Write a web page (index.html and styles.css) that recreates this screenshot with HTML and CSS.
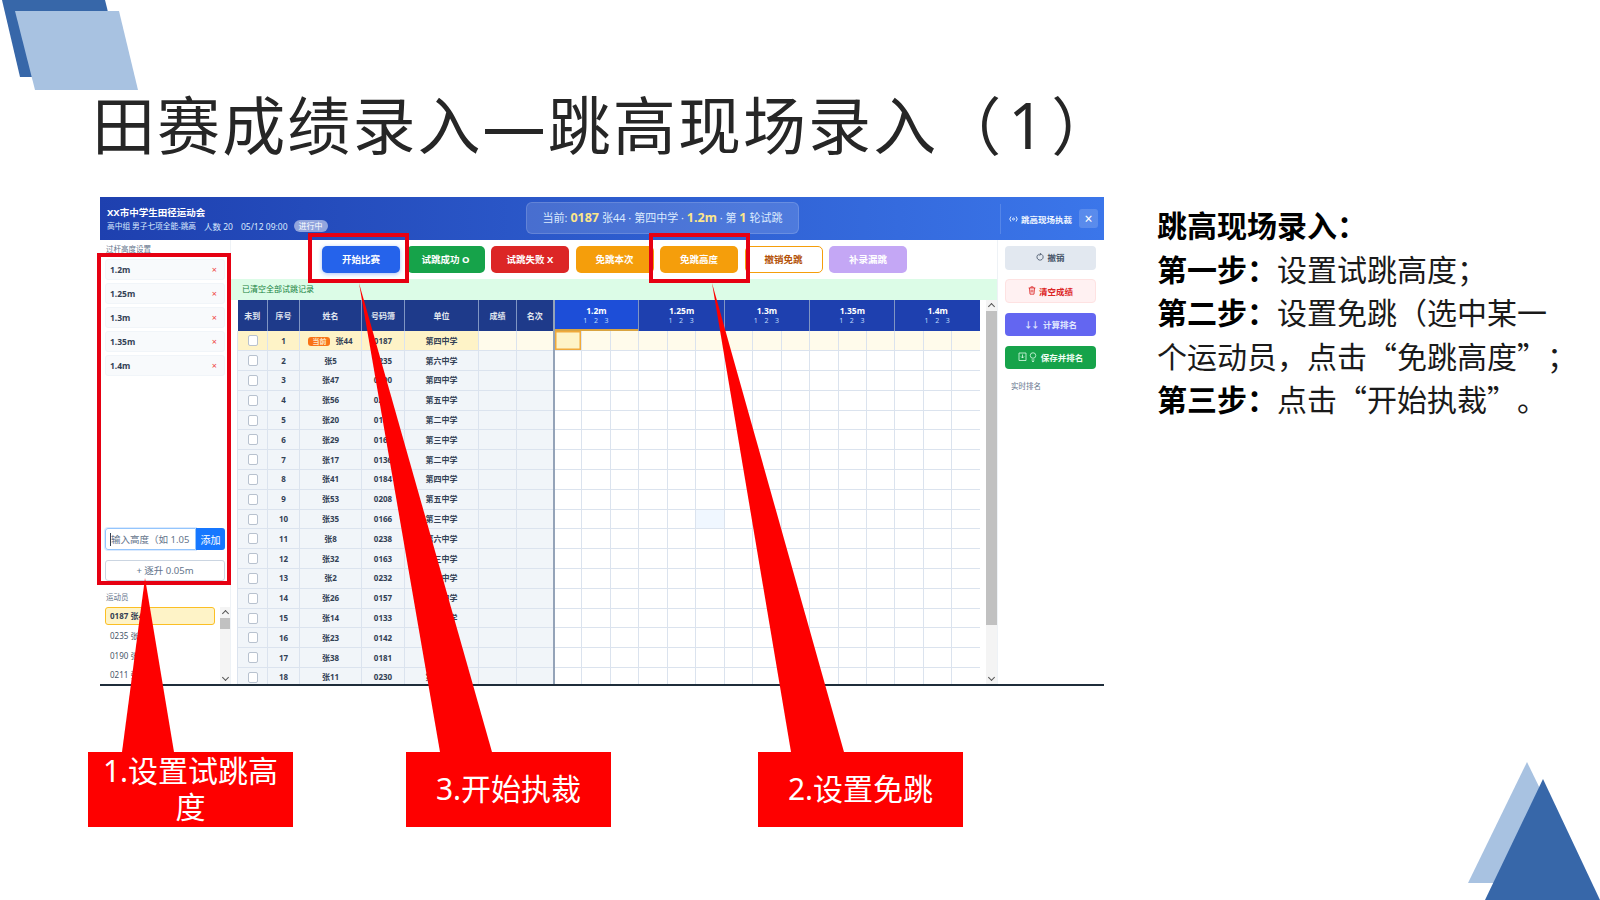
FILE: index.html
```html
<!DOCTYPE html>
<html lang="zh-CN">
<head>
    <meta charset="UTF-8">
    <title>田赛成绩录入</title>
    <link rel="stylesheet" href="styles.css">
</head>
<body>
<div class="slide">
    <svg class="decor" width="1600" height="900" viewBox="0 0 1600 900">
        <polygon points="2,0 105,0 124,77 20,77" fill="#3767a9"/>
        <polygon points="15,11 119,11 138,90 35,90" fill="#a8c2e1"/>
        <polygon points="1527,762 1586,883 1468,883" fill="#a8c2e1"/>
        <polygon points="1543,779 1600,900 1485,900" fill="#3767a9"/>
    </svg>

    <h1 class="slide-title">田赛成绩录入—跳高现场录入<span class="title-num">（1）</span></h1>

    <div class="app">
        <header class="app-head">
            <div class="head-info">
                <div class="head-title">XX市中学生田径运动会</div>
                <div class="head-sub"><span class="sub-event">高中组 男子七项全能-跳高</span><span class="gap"></span>人数 20<span class="gap"></span>05/12 09:00<span class="badge">进行中</span></div>
            </div>
            <div class="head-current">当前: <b>0187</b> 张44 · 第四中学 · <b>1.2m</b> · 第 <b>1</b> 轮试跳</div>
            <div class="head-right">
                <svg width="9" height="8" viewBox="0 0 18 16" fill="none" stroke="#dbeafe" stroke-width="2"><circle cx="9" cy="8" r="2"/><path d="M4 3a7 7 0 0 0 0 10M14 3a7 7 0 0 1 0 10"/></svg>
                <span>跳高现场执裁</span>
                <button class="head-close">×</button>
            </div>
        </header>

        <div class="app-body">
            <aside class="side">
                <div class="side-label">过杆高度设置</div>
                <ul class="height-list">
                    <li>1.2m<i>×</i></li>
                    <li>1.25m<i>×</i></li>
                    <li>1.3m<i>×</i></li>
                    <li>1.35m<i>×</i></li>
                    <li>1.4m<i>×</i></li>
                </ul>
                <div class="height-add">
                    <div class="height-input"><span class="caret"></span>输入高度（如 1.05</div>
                    <button class="add-btn">添加</button>
                </div>
                <button class="step-btn">+ 逐升 0.05m</button>
                <div class="side-label athletes-label">运动员</div>
                <div class="athletes">
                    <ul class="athlete-list">
                        <li class="on">0187 张44</li>
                        <li>0235 张5</li>
                        <li>0190 张47</li>
                        <li>0211 张56</li>
                    </ul>
                    <div class="side-scroll"><span class="up"></span><span class="thumb"></span><span class="down"></span></div>
                </div>
            </aside>

            <main class="main">
                <div class="toolbar">
                    <button class="btn blue">开始比赛</button>
                    <button class="btn green">试跳成功 O</button>
                    <button class="btn red">试跳失败 X</button>
                    <button class="btn orange">免跳本次</button>
                    <button class="btn orange">免跳高度</button>
                    <button class="btn outline">撤销免跳</button>
                    <button class="btn purple">补录漏跳</button>
                </div>
                <div class="flash">已清空全部试跳记录</div>
                <div class="table-wrap">
                    <div class="table-clip">
                        <table class="grid">
                            <colgroup id="cols"></colgroup>
                            <thead>
                                <tr>
                                    <th>未到</th><th>序号</th><th>姓名</th><th>号码簿</th><th>单位</th><th>成绩</th><th class="last-fixed">名次</th>
                                    <th colspan="3" class="h-col now">1.2m<small>1&nbsp; 2&nbsp; 3</small></th>
                                    <th colspan="3" class="h-col">1.25m<small>1&nbsp; 2&nbsp; 3</small></th>
                                    <th colspan="3" class="h-col">1.3m<small>1&nbsp; 2&nbsp; 3</small></th>
                                    <th colspan="3" class="h-col">1.35m<small>1&nbsp; 2&nbsp; 3</small></th>
                                    <th colspan="3" class="h-col">1.4m<small>1&nbsp; 2&nbsp; 3</small></th>
                                </tr>
                            </thead>
                            <tbody id="rows"></tbody>
                        </table>
                    </div>
                    <div class="table-scroll"><span class="up"></span><span class="thumb"></span><span class="down"></span></div>
                </div>
            </main>

            <aside class="tools">
                <button class="tool gray">
                    <svg width="8" height="8" viewBox="0 0 16 16" fill="none" stroke="#475569" stroke-width="1.7"><path d="M5.2 2.6a6.2 6.2 0 1 0 3.4-.7"/><path d="M8.6 0v4H5"/></svg>
                    撤销
                </button>
                <button class="tool pink">
                    <svg width="8" height="9" viewBox="0 0 14 16" fill="none" stroke="#dc2626" stroke-width="1.5"><path d="M1 3.5h12M5 3.5V1.5h4v2M2.5 3.5l1 11h7l1-11M5.5 6.5v5M8.5 6.5v5"/></svg>
                    清空成绩
                </button>
                <button class="tool indigo"><span class="arrows">↓↓</span> 计算排名</button>
                <button class="tool green">
                    <svg width="20" height="10" viewBox="0 0 40 20" fill="none" stroke="#dcfce7" stroke-width="1.6"><path d="M2 2h14v15H2zM9 5v7M6 9l3 3 3-3"/><circle cx="30" cy="7" r="5.5"/><path d="M27 16h6M28 19h4"/></svg>
                    保存并排名
                </button>
                <div class="tools-label">实时排名</div>
            </aside>
        </div>
    </div>

    <div class="frame frame-side"></div>
    <div class="frame frame-start"></div>
    <div class="frame frame-skip"></div>

    <svg class="decor pointers" width="1600" height="900" viewBox="0 0 1600 900">
        <polygon points="145,578 122,752 174,752" fill="#fe0000"/>
        <polygon points="359,283 440,752 492,752" fill="#fe0000"/>
        <polygon points="712,283 791,752 844,752" fill="#fe0000"/>
    </svg>

    <div class="callout c1">1.设置试跳高度</div>
    <div class="callout c2">3.开始执裁</div>
    <div class="callout c3">2.设置免跳</div>

    <div class="steps">
        <b>跳高现场录入：</b><br>
        <b>第一步：</b>设置试跳高度；<br>
        <b>第二步：</b>设置免跳（选中某一<br>
        个运动员，点击“免跳高度”；<br>
        <b>第三步：</b>点击“开始执裁”。
    </div>
</div>
<script src="script.js"></script>
</body>
</html>
```

FILE: styles.css
```css
* {
    box-sizing: border-box;
}
body {
    margin: 0;
    background: #fff;
    font-family: "Noto Sans", "Noto Sans CJK SC", sans-serif;
}
button {
    font-family: inherit;
    border: none;
    padding: 0;
}
ul {
    list-style: none;
    margin: 0;
    padding: 0;
}

/* slide */
.slide {
    position: relative;
    width: 1600px;
    height: 900px;
    overflow: hidden;
    background: #fff;
}
.decor {
    position: absolute;
    left: 0;
    top: 0;
}
.pointers {
    z-index: 3;
}
.slide-title {
    position: absolute;
    left: 92px;
    top: 79px;
    margin: 0;
    font-size: 63px;
    line-height: 92px;
    font-weight: 400;
    letter-spacing: 2.1px;
    color: #262626;
    white-space: nowrap;
}
.title-num {
    letter-spacing: 7px;
}
.frame {
    position: absolute;
    z-index: 2;
    border: 4px solid #e60012;
}
.frame-side {
    left: 97px;
    top: 253px;
    width: 134px;
    height: 332px;
}
.frame-start {
    left: 308px;
    top: 233px;
    width: 101px;
    height: 50px;
}
.frame-skip {
    left: 649px;
    top: 233px;
    width: 101px;
    height: 50px;
}
.callout {
    position: absolute;
    z-index: 4;
    top: 752px;
    width: 205px;
    height: 75px;
    display: flex;
    align-items: center;
    justify-content: center;
    padding: 0 8px 2px;
    background: #fe0000;
    color: #fff;
    font-size: 30px;
    line-height: 36px;
    text-align: center;
}
.c1 {
    left: 88px;
}
.c2 {
    left: 406px;
}
.c3 {
    left: 758px;
}
.steps {
    position: absolute;
    left: 1157px;
    top: 203px;
    width: 430px;
    font-family: "Noto Sans CJK SC", sans-serif;
    font-size: 30px;
    line-height: 43.5px;
    color: #1a1a1a;
    white-space: nowrap;
    text-spacing-trim: space-all;
}
.steps b {
    font-weight: 700;
    color: #000;
}

/* app screenshot */
.app {
    position: absolute;
    left: 100px;
    top: 197px;
    width: 1004px;
    height: 489px;
    overflow: hidden;
    display: flex;
    flex-direction: column;
    background: #fff;
    border-bottom: 2px solid #1f2d3a;
}
.app-head {
    flex: none;
    height: 43px;
    display: flex;
    align-items: center;
    background: linear-gradient(90deg, #1e40af, #3b76ea);
    color: #fff;
    padding-left: 7px;
}
.head-info {
    width: 419px;
}
.head-title {
    font-size: 9.5px;
    line-height: 15px;
    font-weight: 700;
}
.head-sub {
    font-size: 8.5px;
    line-height: 13px;
    color: #dbeafe;
    display: flex;
    align-items: center;
}
.sub-event {
    font-size: 7.7px;
}
.gap {
    width: 8px;
}
.badge {
    margin-left: 6px;
    padding: 0 5px;
    border-radius: 7px;
    background: rgba(255, 255, 255, 0.5);
    color: #fff;
    font-size: 8px;
    line-height: 12px;
}
.head-current {
    width: 273px;
    height: 32px;
    margin-top: -1px;
    line-height: 30px;
    text-align: center;
    font-size: 11px;
    color: #dbeafe;
    white-space: nowrap;
    border: 1px solid rgba(255, 255, 255, 0.15);
    border-radius: 6px;
    background: rgba(255, 255, 255, 0.14);
}
.head-current b {
    color: #fde68a;
    font-size: 12.5px;
}
.head-right {
    flex: 1;
    height: 30px;
    margin-left: 201px;
    padding-left: 8px;
    display: flex;
    align-items: center;
    gap: 3px;
    border-left: 1px solid rgba(255, 255, 255, 0.15);
    font-size: 8.5px;
    font-weight: 700;
    color: #eff6ff;
    white-space: nowrap;
}
.head-close {
    width: 19px;
    height: 19px;
    margin-left: 4px;
    border-radius: 3px;
    background: rgba(255, 255, 255, 0.16);
    color: #fff;
    font-size: 14px;
    line-height: 19px;
}
.app-body {
    flex: 1;
    min-height: 0;
    display: flex;
}

/* left column */
.side {
    flex: none;
    width: 131px;
    padding: 0 5px 0 5px;
    border-right: 1px solid #eef2f6;
    display: flex;
    flex-direction: column;
}
.side-label {
    height: 19px;
    padding-left: 1px;
    font-size: 7.5px;
    line-height: 19px;
    color: #64748b;
}
.height-list {
    flex: none;
    height: 269px;
}
.height-list li {
    height: 21px;
    margin-bottom: 3px;
    padding: 0 7px 0 4px;
    display: flex;
    justify-content: space-between;
    align-items: center;
    border: 1px solid #f1f5f9;
    border-radius: 3px;
    background: #f8fafc;
    font-size: 8.5px;
    font-weight: 700;
    color: #334155;
}
.height-list i {
    font-style: normal;
    font-weight: 400;
    color: #ef4444;
    font-size: 9px;
}
.height-add {
    flex: none;
    height: 22px;
    display: flex;
}
.height-input {
    flex: 1;
    display: flex;
    align-items: center;
    padding-left: 4px;
    border: 1px solid #93c5fd;
    border-radius: 3px 0 0 3px;
    box-shadow: 0 0 0 1px #dbeafe;
    font-size: 9.5px;
    color: #64748b;
    white-space: nowrap;
    overflow: hidden;
}
.caret {
    width: 1px;
    height: 13px;
    background: #334155;
}
.add-btn {
    flex: none;
    width: 29px;
    border-radius: 0 3px 3px 0;
    background: #1677ff;
    color: #fff;
    font-size: 10px;
}
.step-btn {
    flex: none;
    height: 21px;
    margin-top: 10px;
    padding-bottom: 2px;
    border: 1px solid #cbd5e1;
    border-radius: 3px;
    background: #fff;
    color: #64748b;
    font-size: 9.5px;
}
.athletes-label {
    margin-top: 7px;
    margin-bottom: 0;
    height: 19px;
}
.athletes {
    flex: 1;
    min-height: 0;
    display: flex;
    margin-right: -5px;
    overflow: hidden;
}
.athlete-list {
    width: 110px;
    flex: none;
}
.athlete-list li {
    height: 19.5px;
    padding-left: 5px;
    font-size: 8px;
    line-height: 19px;
    color: #475569;
}
.athlete-list li.on {
    height: 18px;
    margin-bottom: 1px;
    line-height: 16px;
    border: 1px solid #fbbf24;
    border-radius: 3px;
    background: #fef3c7;
    padding-left: 4px;
    font-weight: 700;
    color: #334155;
}
.side-scroll {
    width: 11px;
    margin-left: 5px;
    display: flex;
    flex-direction: column;
    align-items: stretch;
    background: #f4f4f4;
}
.side-scroll .thumb {
    height: 11px;
    margin-top: 1px;
    background: #c1c1c1;
}
.up, .down {
    flex: none;
    height: 10px;
    position: relative;
}
.up::after, .down::after {
    content: "";
    position: absolute;
    left: 3px;
    top: 4px;
    width: 4px;
    height: 4px;
    border-left: 1.2px solid #555;
    border-top: 1.2px solid #555;
    transform: rotate(45deg);
}
.down {
    margin-top: auto;
}
.down::after {
    top: 1px;
    transform: rotate(225deg);
}

/* middle */
.main {
    flex: none;
    width: 766px;
    display: flex;
    flex-direction: column;
    min-height: 0;
}
.toolbar {
    flex: none;
    height: 39px;
    padding: 6px 0 0 91px;
    display: flex;
    gap: 6.5px;
}
.btn {
    flex: none;
    width: 78px;
    height: 27px;
    padding-bottom: 1px;
    border-radius: 5px;
    color: #fff;
    font-size: 9.5px;
    font-weight: 700;
}
.btn.blue {
    background: #2563eb;
    box-shadow: 0 1px 4px rgba(37, 99, 235, 0.4);
}
.btn.green {
    background: #16a34a;
}
.btn.red {
    background: #dc2626;
}
.btn.orange {
    background: #f59e0b;
}
.btn.outline {
    background: #fff;
    border: 1px solid #f59e0b;
    color: #b45309;
}
.btn.purple {
    background: #c4a7f5;
}
.flash {
    flex: none;
    height: 21px;
    padding-left: 11px;
    background: #dcfce7;
    color: #15803d;
    font-size: 8px;
    line-height: 20px;
}
.table-wrap {
    flex: 1;
    min-height: 0;
    display: flex;
    padding-left: 6px;
}
.table-clip {
    flex: none;
    width: 743px;
    overflow: hidden;
}
.grid {
    width: 743px;
    table-layout: fixed;
    border-collapse: collapse;
    font-size: 8px;
    color: #334155;
}
.grid th {
    height: 31px;
    padding: 0;
    background: #1e3a8a;
    color: #e2e8f0;
    font-size: 8px;
    font-weight: 700;
    border-right: 1px solid #7f95c4;
    text-align: center;
}
.grid th.h-col {
    background: #1e40af;
    color: #fff;
    font-size: 8.5px;
    line-height: 10px;
    vertical-align: top;
    padding-top: 6px;
}
.grid th.now {
    background: #1d4ed8;
    box-shadow: inset 0 -2px 0 #d9a441;
}
.grid small {
    display: block;
    font-size: 7px;
    font-weight: 400;
    color: #bfdbfe;
    letter-spacing: 1px;
}
.grid td {
    height: 19.8px;
    padding: 0 0 1px;
    text-align: center;
    border: 1px solid #dbe3ee;
    border-top: none;
    font-weight: 700;
    white-space: nowrap;
    overflow: hidden;
}
.grid .fixed {
    background: #f1f5f9;
}
.grid .last-fixed {
    border-right: 2px solid #94a3b8;
}
.grid tr.active .fixed {
    background: #fef3c7;
}
.grid tr.active .score,
.grid tr.active .try {
    background: #fffbeb;
}
.grid tr.active .try.cursor {
    background: #fef3c7;
    box-shadow: inset 0 0 0 1.5px #f0a93a;
}
.grid .try.hover {
    background: #f0f7ff;
}
.check {
    display: block;
    width: 10px;
    height: 11px;
    margin: 1px auto 0;
    background: #fff;
    border: 1px solid #b8c2cf;
    border-radius: 2px;
}
.tag {
    display: inline-block;
    padding: 0 4px;
    margin-right: 5px;
    border-radius: 3px;
    background: #f97316;
    color: #fde7c7;
    font-size: 7px;
    line-height: 9px;
}
.table-scroll {
    flex: none;
    width: 11px;
    margin-left: 6px;
    display: flex;
    flex-direction: column;
    background: #f4f4f4;
}
.table-scroll .thumb {
    height: 314px;
    margin-top: 1px;
    background: #c1c1c1;
}

/* right column */
.tools {
    flex: none;
    width: 107px;
    padding: 6px 8px 0 7px;
    border-left: 1px solid #eef2f6;
    display: flex;
    flex-direction: column;
    gap: 9.8px;
}
.tool {
    flex: none;
    height: 23.5px;
    padding-bottom: 1px;
    display: flex;
    align-items: center;
    justify-content: center;
    gap: 3px;
    border-radius: 4px;
    font-size: 8.5px;
    font-weight: 700;
}
.tool.gray {
    background: #e2e8f0;
    color: #475569;
}
.tool.pink {
    background: #fff1f2;
    border: 1px solid #fee2e2;
    color: #dc2626;
}
.tool.indigo {
    background: #6366f1;
    color: #e0e7ff;
}
.arrows {
    letter-spacing: -1.5px;
    margin-right: 2px;
}
.tool.green {
    background: #16a34a;
    color: #f0fdf4;
}
.tools-label {
    margin: 1px 0 0 6px;
    font-size: 7.5px;
    color: #64748b;
}
```

FILE: script.js
```js
const names = [44, 5, 47, 56, 20, 29, 17, 41, 53, 35, 8, 32, 2, 26, 14, 23, 38, 11];
const codes = ["0187", "0235", "0190", "0211", "0175", "0168", "0136", "0184", "0208", "0166", "0238", "0163", "0232", "0157", "0133", "0142", "0181", "0230"];
const schools = ["四", "六", "四", "五", "二", "三", "二", "四", "五", "三", "六", "三", "一", "六", "一", "五", "二", "三"];
const widths = [30, 32, 62, 43, 74, 38, 37];

const cols = document.getElementById("cols");
let colHtml = "";
widths.forEach(w => colHtml += `<col style="width:${w}px">`);
for (let i = 0; i < 15; i++) colHtml += `<col style="width:${427 / 15}px">`;
cols.innerHTML = colHtml;

let html = "";
names.forEach((n, i) => {
    const tag = i === 0 ? `<span class="tag">当前</span>` : "";
    let tries = "";
    for (let t = 0; t < 15; t++) {
        let cls = "try";
        if (i === 0 && t === 0) cls += " cursor";
        if (i === 9 && t === 5) cls += " hover";
        tries += `<td class="${cls}"></td>`;
    }
    html += `<tr class="${i === 0 ? "active" : ""}">
        <td class="fixed"><span class="check"></span></td>
        <td class="fixed">${i + 1}</td>
        <td class="fixed">${tag}张${n}</td>
        <td class="fixed">${codes[i]}</td>
        <td class="fixed">第${schools[i]}中学</td>
        <td class="fixed score"></td>
        <td class="fixed score last-fixed"></td>
        ${tries}
    </tr>`;
});
document.getElementById("rows").innerHTML = html;
```
